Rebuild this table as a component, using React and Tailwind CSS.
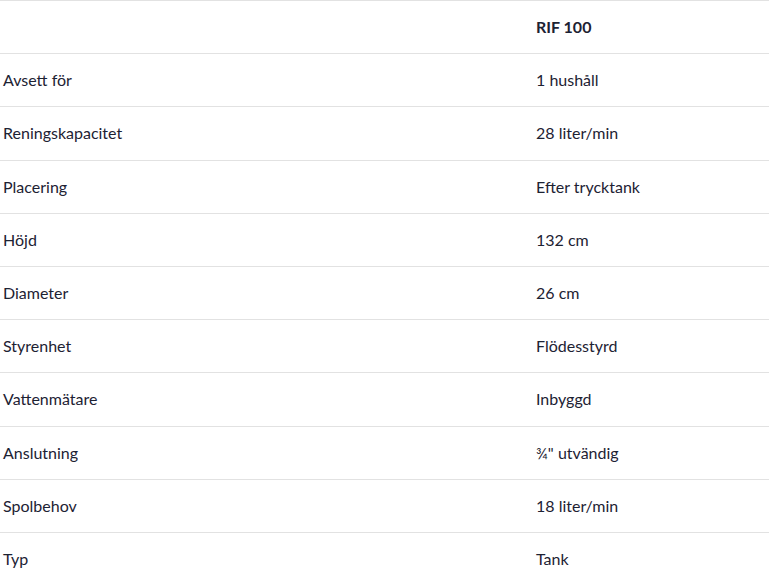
import React from "react";

const rows = [
  ["Avsett för", "1 hushåll"],
  ["Reningskapacitet", "28 liter/min"],
  ["Placering", "Efter trycktank"],
  ["Höjd", "132 cm"],
  ["Diameter", "26 cm"],
  ["Styrenhet", "Flödesstyrd"],
  ["Vattenmätare", "Inbyggd"],
  ["Anslutning", "¾\" utvändig"],
  ["Spolbehov", "18 liter/min"],
  ["Typ", "Tank"],
];

export default function App() {
  return (
    <div className="w-[769px] h-[580px] overflow-hidden bg-white text-[16px] text-[#1d2233] font-['Lato',sans-serif]">
      <div className="grid grid-cols-[533px_1fr] h-[53.2px] border-t border-[#e2e2e2] items-center">
        <div className="px-[3px]"></div>
        <div className="px-[3px] font-bold">RIF 100</div>
      </div>
      {rows.map(([label, value]) => (
        <div
          key={label}
          className="grid grid-cols-[533px_1fr] h-[53.2px] border-t border-[#e2e2e2] items-center"
        >
          <div className="px-[3px]">{label}</div>
          <div className="px-[3px]">{value}</div>
        </div>
      ))}
    </div>
  );
}
